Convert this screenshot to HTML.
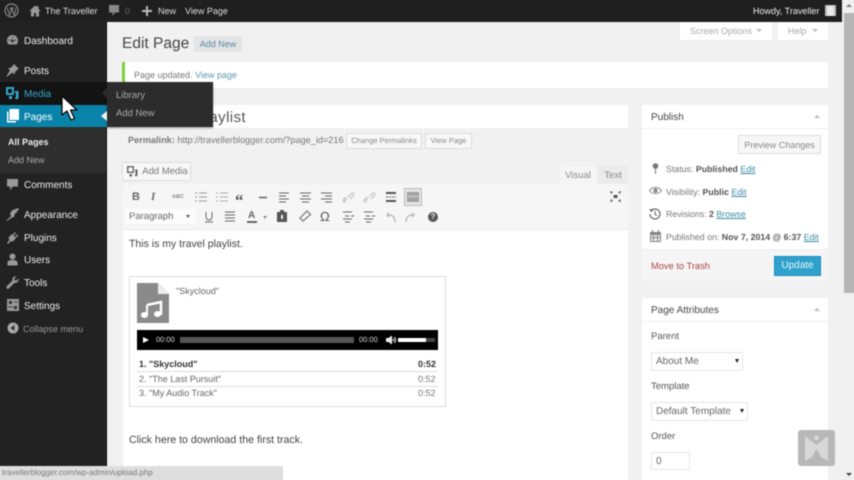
<!DOCTYPE html>
<html><head><meta charset="utf-8"><title>Edit Page</title>
<style>
*{box-sizing:border-box}
html,body{margin:0;padding:0;width:854px;height:480px;overflow:hidden;background:#f1f1f1}
body{font-family:"Liberation Sans",sans-serif;font-size:10px;color:#555;position:relative;text-rendering:geometricPrecision}
#w{position:absolute;left:0;top:0;width:854px;height:480px;overflow:visible;filter:blur(.45px)}
.a{position:absolute;white-space:nowrap}
.t{position:absolute;white-space:nowrap;line-height:14px;transform:translateY(-6px)}
.box{position:absolute;background:#fff}
.btn{position:absolute;background:#f7f7f7;border:1px solid #ddd;text-align:center;color:#777;white-space:nowrap}
.m{position:absolute;left:24px;font-size:10px;color:#eee;line-height:14px;transform:translateY(-5px);white-space:nowrap}
svg{position:absolute;overflow:visible}
.l{color:#3a8aa6;text-decoration:underline}
b{color:#555}
.sel{position:absolute;background:#fff;border:1px solid #e6e6e6;font-size:10px;color:#666;line-height:17px;padding-left:4px;white-space:nowrap}
.sel i{position:absolute;top:6px;width:0;height:0;border-left:2.5px solid transparent;border-right:2.5px solid transparent;border-top:4px solid #222}
</style></head><body><div id="w">

<!-- sidebar -->
<div class="a" style="left:-10px;top:-10px;width:116px;height:500px;background:#222"></div>
<div class="a" style="left:106px;top:22px;width:1px;height:468px;background:#0c0c0c"></div>
<div class="a" style="left:-10px;top:82px;width:117px;height:23px;background:#131313"></div>
<div class="a" style="left:-10px;top:105px;width:117px;height:22px;background:#0a83aa"></div>
<div class="a" style="left:-10px;top:127px;width:116px;height:46px;background:#2e2e2e"></div>

<div class="m" style="top:40px">Dashboard</div>
<div class="m" style="top:70px">Posts</div>
<div class="m" style="top:93px;color:#36a5cc">Media</div>
<div class="m" style="top:116px;color:#fff">Pages</div>
<div class="m" style="top:140px;left:8px;font-size:9px;font-weight:bold;color:#eee">All Pages</div>
<div class="m" style="top:158px;left:8px;font-size:9px;color:#aaa">Add New</div>
<div class="m" style="top:184px">Comments</div>
<div class="m" style="top:214px">Appearance</div>
<div class="m" style="top:237px">Plugins</div>
<div class="m" style="top:259px">Users</div>
<div class="m" style="top:282px">Tools</div>
<div class="m" style="top:305px">Settings</div>
<div class="m" style="top:327px;left:23px;font-size:9px;color:#999">Collapse menu</div>

<!-- sidebar icons -->
<svg style="left:6px;top:34px" width="13" height="12" viewBox="0 0 13 12"><path d="M6.5 1A5.5 5.5 0 0 0 1 6.5c0 1.6.6 3 1.5 4h8c.9-1 1.5-2.4 1.5-4A5.5 5.5 0 0 0 6.5 1z" fill="#999"/><circle cx="6.5" cy="7" r="1.5" fill="#333"/><circle cx="3.5" cy="6" r=".8" fill="#333"/><circle cx="9.5" cy="6" r=".8" fill="#333"/><circle cx="6.5" cy="3.5" r=".8" fill="#333"/></svg>
<svg style="left:6px;top:64px" width="13" height="13" viewBox="0 0 13 13"><path d="M8 0l5 5-1.500.5-2.500 2.500-.5 2.500-2-2L1 12.500 0 13l.5-1L4 6.500l-2-2L4.500 4 7 1.500z" fill="#999"/></svg>
<svg style="left:6px;top:87px" width="13" height="13" viewBox="0 0 13 13"><path d="M0 0h6v6H0z" fill="none" stroke="#36a5cc" stroke-width="2" transform="translate(1 1)"/><path d="M9 4h3.500v7l-2 1.500-2-1.500 1.500-1V6H9zM3 9h3v3H3z" fill="#36a5cc"/></svg>
<svg style="left:6px;top:109px" width="13" height="14" viewBox="0 0 13 14"><path d="M3.500 0H13v11H3.500z" fill="#fff"/><path d="M1 2.500h1.500V12H10v1.500H1z" fill="#fff"/></svg>
<svg style="left:6px;top:178px" width="13" height="13" viewBox="0 0 13 13"><path d="M1 1h11v7.500H7L4 12V8.500H1z" fill="#999"/></svg>
<svg style="left:6px;top:208px" width="13" height="13" viewBox="0 0 13 13"><path d="M13 1.500l-1-1.500-6 2.500-2 3L5 8 .5 12.500 1 13l5-3.500 2-.5 1-3.500 3-2-2 .5z" fill="#999"/></svg>
<svg style="left:6px;top:231px" width="13" height="13" viewBox="0 0 13 13"><path d="M1 12l2.500-3-1-2.500L6 3l4 4-3 3.500-2-.5-3 3zM7 3.500l2-2.500 1 1-2 2.500zM9 5.500l2.500-2 1 1-2.500 2z" fill="#999"/></svg>
<svg style="left:6px;top:253px" width="13" height="13" viewBox="0 0 13 13"><circle cx="6.500" cy="3.500" r="3" fill="#999"/><path d="M1.500 12.500v-3c0-1.500 1.500-2.500 5-2.500s5 1 5 2.500v3z" fill="#999"/></svg>
<svg style="left:6px;top:276px" width="13" height="13" viewBox="0 0 13 13"><path d="M12.500 2.500L10 5 8 3l2.500-2.500C8 0 6 1.500 6.500 4.500L.5 10.500c-.5.600 0 1.500.5 2s1.300.5 1.800 0L8.500 6.800c3 .5 4.500-1.800 4-4.300z" fill="#999"/></svg>
<svg style="left:7px;top:299px" width="12" height="12" viewBox="0 0 12 12"><path d="M0 0h12v12H0z" fill="#999"/><path d="M2 2h3v3H2zM7 7h3v3H7z" fill="#333"/><path d="M1 7.500h5v1H1zM7 2.500h4v1H7z" fill="#444"/></svg>
<svg style="left:7px;top:322px" width="12" height="12" viewBox="0 0 12 12"><circle cx="6" cy="6" r="5.500" fill="#aaa"/><path d="M7.500 3v6L3.500 6z" fill="#333"/></svg>

<!-- admin bar -->
<div class="a" style="left:-10px;top:-10px;width:852px;height:32px;background:#1f1f1f"></div>
<svg style="left:4px;top:3px" width="15" height="15" viewBox="0 0 15 15"><circle cx="7.500" cy="7.500" r="6.500" fill="none" stroke="#888" stroke-width="1.200"/><path d="M3.200 5l2.500 7 1.700-4.800-1-2.200M6 5h3.800M7.800 5l2.300 7 1.500-4.500c.3-1-.2-1.800-.5-2.300" fill="none" stroke="#888" stroke-width="1.100"/></svg>
<svg style="left:29px;top:5px" width="12" height="12" viewBox="0 0 12 12"><path d="M6 .5L.5 6h1.500v5.500h3v-3.500h2v3.500h3V6h1.500L9.500 3.500V1H8v1z" fill="#999"/></svg>
<div class="t" style="left:45px;top:10px;font-size:9px;color:#ddd">The Traveller</div>
<svg style="left:109px;top:5px" width="11" height="11" viewBox="0 0 11 11"><path d="M0 0h10v7.500H6L3.500 11V7.500H0z" fill="#888"/></svg>
<div class="t" style="left:125px;top:10px;font-size:9px;color:#666">0</div>
<svg style="left:142px;top:6px" width="10" height="10" viewBox="0 0 10 10"><path d="M4 0h2v4h4v2H6v4H4V6H0V4h4z" fill="#bbb"/></svg>
<div class="t" style="left:158px;top:10px;font-size:9px;color:#ddd">New</div>
<div class="t" style="left:185px;top:10px;font-size:9px;color:#ddd">View Page</div>
<div class="t" style="left:753px;top:10px;font-size:9px;color:#eee">Howdy, Traveller</div>
<div class="a" style="left:825px;top:5px;width:11px;height:11px;background:#bbb"></div>
<div class="a" style="left:827px;top:6px;width:7px;height:10px;background:#e8e8e8"></div>

<!-- scrollbar -->
<div class="a" style="left:842px;top:-10px;width:22px;height:500px;background:#f0f0f0"></div>
<div class="a" style="left:844px;top:13px;width:20px;height:280px;background:#b5b5b5"></div>
<div class="a" style="left:846px;top:4px;width:0;height:0;border-left:3px solid transparent;border-right:3px solid transparent;border-bottom:3px solid #777"></div>
<div class="a" style="left:846px;top:473px;width:0;height:0;border-left:3px solid transparent;border-right:3px solid transparent;border-top:3px solid #444"></div>

<!-- screen tabs -->
<div class="box" style="left:680px;top:22px;width:92px;height:18px"></div>
<div class="t" style="left:690px;top:30px;font-size:9px;color:#aaa">Screen Options</div>
<div class="a" style="left:756px;top:29px;width:0;height:0;border-left:3px solid transparent;border-right:3px solid transparent;border-top:3px solid #bbb"></div>
<div class="box" style="left:778px;top:22px;width:50px;height:18px"></div>
<div class="t" style="left:788px;top:30px;font-size:9px;color:#aaa">Help</div>
<div class="a" style="left:812px;top:29px;width:0;height:0;border-left:3px solid transparent;border-right:3px solid transparent;border-top:3px solid #bbb"></div>

<!-- heading -->
<div class="t" style="left:122px;top:43px;font-size:15.500px;color:#444;line-height:20px;transform:translateY(-9px)">Edit Page</div>
<div class="a" style="left:194px;top:36px;width:48px;height:16px;background:#e2e4e6;color:#5a8ca0;font-size:9px;line-height:16px;text-align:center">Add New</div>

<!-- notice -->
<div class="box" style="left:122px;top:62px;width:706px;height:26px;border-left:3px solid #7ad03a"></div>
<div class="t" style="left:134px;top:74px;font-size:9px;color:#777">Page updated. <span style="color:#5a99ae">View page</span></div>

<!-- title -->
<div class="box" style="left:122px;top:105px;width:506px;height:23px"></div>
<div class="a" style="right:608px;top:108px;font-size:15px;line-height:20px;color:#555;letter-spacing:.4px">My Travel Playlist</div>

<!-- permalink -->
<div class="t" style="left:128px;top:139px;font-size:9.170px;color:#777"><b style="color:#777">Permalink:</b> http://travellerblogger.com/?page_id=216</div>
<div class="btn" style="left:346px;top:133px;width:76px;height:16px;font-size:7.500px;line-height:14px;color:#888">Change Permalinks</div>
<div class="btn" style="left:425px;top:133px;width:47px;height:16px;font-size:7.500px;line-height:14px;color:#888">View Page</div>

<!-- add media -->
<div class="btn" style="left:122px;top:162px;width:69px;height:19px;font-size:9.500px;line-height:17px;padding-left:17px;color:#777">Add Media</div>
<svg style="left:127px;top:166px" width="11" height="11" viewBox="0 0 11 11"><path d="M.7.700h5.600v5.600H.7z" fill="none" stroke="#666" stroke-width="1.400"/><path d="M8 3.500h2.500v6l-1.500 1-1.500-1 1-.8V5H8zM2.500 8h2.500v2.500H2.500z" fill="#666"/></svg>

<!-- tabs -->
<div class="a" style="left:560px;top:166px;width:36px;height:19px;background:#f5f5f5;color:#888;font-size:9.500px;line-height:19px;text-align:center">Visual</div>
<div class="a" style="left:598px;top:166px;width:30px;height:19px;background:#ebebeb;color:#888;font-size:9.500px;line-height:19px;text-align:center">Text</div>

<!-- toolbar + editor -->
<div class="a" style="left:123px;top:184px;width:505px;height:45px;background:#f6f6f6"></div>
<div class="box" style="left:123px;top:229px;width:505px;height:271px;border-top:1px solid #e8e8e8"></div>

<!-- toolbar row 1 -->
<div class="a" style="left:132px;top:192px;font:bold 11px/11px 'Liberation Sans',sans-serif;color:#666">B</div>
<div class="a" style="left:151px;top:192px;font:italic bold 11px/11px 'Liberation Serif',serif;color:#666">I</div>
<div class="a" style="left:172px;top:194px;font:bold 5.500px/6px 'Liberation Sans',sans-serif;color:#888">ABC</div>
<svg style="left:0;top:0" width="854" height="480" fill="none" stroke="#888" stroke-width="1">
<path d="M195 193h2M199 193h8M195 197h2M199 197h8M195 201h2M199 201h8" stroke="#999"/>
<path d="M216 193h2M220 193h8M216 197h2M220 197h8M216 201h2M220 201h8" stroke="#aaa"/>
<path d="M259 197.500h8" stroke="#555" stroke-width="1.400"/>
<path d="M279 193h10M279 196h7M279 199h10M279 202h7" stroke="#666"/>
<path d="M300 193h11M302 196h7M300 199h11M302 202h7" stroke="#666"/>
<path d="M321 193h11M325 196h7M321 199h11M325 202h7" stroke="#666"/>
<path d="M343 202l4-4M348 197l3-3c2-2 4 0 2 2l-3 3M346 201c-2 2-4 0-2-2l2-2" stroke="#ccc" stroke-width="1.500"/>
<path d="M364 202l4-4M369 197l3-3c2-2 4 0 2 2l-3 3M367 201c-2 2-4 0-2-2l2-2" stroke="#d0d0d0" stroke-width="1.500"/>
<path d="M386 193h10M386 201h10" stroke="#555" stroke-width="2"/><path d="M386 197h10" stroke="#555" stroke-dasharray="2 1"/>
<path d="M206 212v5a3 3 0 0 0 6 0v-5M205 222h8" stroke="#666"/>
<path d="M225 212h10M225 215h10M225 218h10M225 221h10" stroke="#666"/>
<path d="M247 222h10" stroke="#3a3a3a" stroke-width="1.500"/>
<path d="M303 221l-3-3 7-7 3.500 3.500z" stroke="#777" stroke-width="1.200"/>
<path d="M343 212h9M345 216h4M351 216h3M343 219h9M345 222h5" stroke="#666"/>
<path d="M364 212h9M366 216h4M372 216h3M364 219h9M366 222h5" stroke="#666"/>
<path d="M395 222c0-4-2-7-6-7" stroke="#bbb" stroke-width="1.500"/><path d="M389 212v6l-3-3z" fill="#bbb" stroke="none"/>
<path d="M406 222c0-4 2-7 6-7" stroke="#bbb" stroke-width="1.500"/><path d="M412 212v6l3-3z" fill="#bbb" stroke="none"/>
</svg>
<div class="a" style="left:235px;top:192px;font:bold 17px/17px 'Liberation Serif',serif;color:#555">“</div>
<div class="a" style="left:404px;top:188px;width:18px;height:18px;background:#e4e4e4;border:1px solid #bbb"></div>
<div class="a" style="left:407px;top:192px;width:12px;height:10px;background:#a0a0a0"></div>
<div class="a" style="left:408px;top:195px;width:10px;height:3px;background:#bbb"></div>
<!-- row 2 -->
<div class="a" style="left:125px;top:209px;width:71px;height:15px;background:#fcfcfc;font-size:9.500px;line-height:15px;padding-left:4px;color:#666">Paragraph</div>
<div class="a" style="left:186px;top:215px;width:0;height:0;border-left:2.500px solid transparent;border-right:2.500px solid transparent;border-top:3px solid #555"></div>
<div class="a" style="left:248px;top:211px;font:bold 10px/10px 'Liberation Sans',sans-serif;color:#666">A</div>
<div class="a" style="left:263px;top:216px;width:0;height:0;border-left:2.500px solid transparent;border-right:2.500px solid transparent;border-top:3px solid #888"></div>
<div class="a" style="left:277px;top:212px;width:10px;height:10px;background:#555"></div>
<div class="a" style="left:280px;top:210px;width:4px;height:3px;background:#555"></div>
<div class="a" style="left:281px;top:215px;width:2px;height:4px;background:#eee"></div>
<div class="a" style="left:320px;top:210px;font:13px/14px 'Liberation Sans',sans-serif;color:#555">Ω</div>
<div class="a" style="left:428px;top:212px;width:10px;height:10px;border-radius:50%;background:#555;color:#eee;font:bold 8px/10px 'Liberation Sans',sans-serif;text-align:center">?</div>
<svg style="left:610px;top:191px" width="11" height="11" viewBox="0 0 11 11" fill="#555"><path d="M3.500 4h4v3h-4z"/><path d="M0 0l3 1-2 2zM11 0l-1 3-2-2zM0 11l1-3 2 2zM11 11l-3-1 2-2z"/></svg>

<!-- editor content -->
<div class="t" style="left:129px;top:243px;font-size:10.500px;color:#444">This is my travel playlist.</div>
<div class="a" style="left:129px;top:276px;width:317px;height:131px;border:1px solid #ddd;background:#fff"></div>
<svg style="left:137px;top:283px" width="32" height="40" viewBox="0 0 32 40"><path d="M0 0h21l11 11v29H0z" fill="#8a8a8a"/><path d="M21 0l11 11H21z" fill="#eee"/><path d="M10 22l14-3v13" fill="none" stroke="#fff" stroke-width="2.500"/><ellipse cx="7.500" cy="32" rx="3.500" ry="3" fill="#fff"/><ellipse cx="20.500" cy="31" rx="3.500" ry="3" fill="#fff"/><path d="M10 22v10" stroke="#fff" stroke-width="2"/></svg>
<div class="t" style="left:176px;top:290px;font-size:9px;color:#666">"Skycloud"</div>
<div class="a" style="left:137px;top:330px;width:301px;height:20px;background:#000"></div>
<div class="a" style="left:143px;top:337px;width:0;height:0;border-top:3.500px solid transparent;border-bottom:3.500px solid transparent;border-left:6px solid #fff"></div>
<div class="t" style="left:156px;top:340px;font-size:7.500px;color:#ddd;transform:translateY(-7px)">00:00</div>
<div class="a" style="left:180px;top:337px;width:174px;height:6px;background:#555"></div>
<div class="t" style="left:359px;top:340px;font-size:7.500px;color:#ddd;transform:translateY(-7px)">00:00</div>
<svg style="left:386px;top:335px" width="10" height="10" viewBox="0 0 10 10"><path d="M0 3h2.500L6 .5v9L2.500 7H0z" fill="#eee"/><path d="M7 3.500c1 1 1 2 0 3M8.500 2c1.500 2 1.500 4 0 6" stroke="#eee" fill="none"/></svg>
<div class="a" style="left:398px;top:338px;width:37px;height:4px;background:#444"></div>
<div class="a" style="left:398px;top:338px;width:28px;height:4px;background:#fff"></div>
<div class="t" style="left:139px;top:363px;font-size:9px;color:#333;font-weight:bold">1. "Skycloud"</div>
<div class="t" style="left:418px;top:363px;font-size:9px;color:#333;font-weight:bold">0:52</div>
<div class="a" style="left:137px;top:371px;width:301px;height:1px;background:#ddd"></div>
<div class="t" style="left:139px;top:378px;font-size:9px;color:#666">2. "The Last Pursuit"</div>
<div class="t" style="left:418px;top:378px;font-size:9px;color:#777">0:52</div>
<div class="a" style="left:137px;top:386px;width:301px;height:1px;background:#ddd"></div>
<div class="t" style="left:139px;top:392px;font-size:9px;color:#666">3. "My Audio Track"</div>
<div class="t" style="left:418px;top:392px;font-size:9px;color:#777">0:52</div>
<div class="t" style="left:129px;top:439px;font-size:10.620px;color:#444">Click here to download the first track.</div>

<!-- publish -->
<div class="box" style="left:642px;top:105px;width:186px;height:176px"></div>
<div class="a" style="left:642px;top:128px;width:186px;height:1px;background:#eee"></div>
<div class="t" style="left:651px;top:117px;font-size:10px;color:#444">Publish</div>
<div class="a" style="left:814px;top:115px;width:0;height:0;border-left:3px solid transparent;border-right:3px solid transparent;border-bottom:3px solid #bbb"></div>
<div class="btn" style="left:738px;top:135px;width:83px;height:19px;font-size:9px;line-height:18px;color:#888">Preview Changes</div>
<svg style="left:652px;top:163px" width="7" height="11" viewBox="0 0 7 11"><circle cx="3.500" cy="3" r="2.800" fill="#777"/><path d="M3 5h1v6H3z" fill="#777"/></svg>
<div class="t" style="left:666px;top:168px;font-size:8.800px;color:#777">Status: <b>Published</b> <span class="l">Edit</span></div>
<svg style="left:649px;top:186px" width="13" height="9" viewBox="0 0 13 9"><path d="M.5 4.500C3 .5 10 .5 12.500 4.500 10 8.500 3 8.500.5 4.500z" fill="none" stroke="#888"/><circle cx="6.500" cy="4.500" r="2.200" fill="#888"/></svg>
<div class="t" style="left:666px;top:191px;font-size:8.800px;color:#777">Visibility: <b>Public</b> <span class="l">Edit</span></div>
<svg style="left:649px;top:208px" width="12" height="12" viewBox="0 0 12 12"><path d="M2 3a5 5 0 1 1-1 3" fill="none" stroke="#666" stroke-width="1.200"/><path d="M0 1.500L3.500 1 3 4.500z" fill="#666"/><path d="M6 3v3.500l2 1" fill="none" stroke="#666"/></svg>
<div class="t" style="left:666px;top:213px;font-size:8.800px;color:#777">Revisions: <b>2</b> <span class="l">Browse</span></div>
<svg style="left:650px;top:230px" width="11" height="12" viewBox="0 0 11 12"><path d="M0 2h11v10H0z" fill="#888"/><path d="M1 5h2v2H1zM4 5h3v2H4zM8 5h2v2H8zM1 8h2v3H1zM4 8h3v3H4zM8 8h2v3H8z" fill="#eee"/><path d="M2 0h1v3H2zM8 0h1v3H8z" fill="#666"/></svg>
<div class="t" style="left:666px;top:236px;font-size:8.800px;color:#777">Published on: <b>Nov 7, 2014 @ 6:37</b> <span class="l">Edit</span></div>
<div class="a" style="left:642px;top:249px;width:186px;height:32px;background:#f5f5f5;border-top:1px solid #eee"></div>
<div class="t" style="left:651px;top:265px;font-size:9.300px;color:#a44">Move to Trash</div>
<div class="a" style="left:774px;top:256px;width:47px;height:20px;background:#2ea2cc;border:1px solid #1e8cbe;color:#e8f4f8;font-size:10px;line-height:18px;text-align:center">Update</div>

<!-- page attributes -->
<div class="box" style="left:642px;top:298px;width:186px;height:202px"></div>
<div class="a" style="left:642px;top:321px;width:186px;height:1px;background:#eee"></div>
<div class="t" style="left:651px;top:310px;font-size:10px;color:#444">Page Attributes</div>
<div class="a" style="left:814px;top:308px;width:0;height:0;border-left:3px solid transparent;border-right:3px solid transparent;border-bottom:3px solid #bbb"></div>
<div class="t" style="left:651px;top:336px;font-size:9.500px;color:#555">Parent</div>
<div class="sel" style="left:651px;top:352px;width:92px;height:19px">About Me<i style="left:83px"></i></div>
<div class="t" style="left:651px;top:386px;font-size:9.500px;color:#555">Template</div>
<div class="sel" style="left:651px;top:402px;width:97px;height:19px">Default Template<i style="left:88px"></i></div>
<div class="t" style="left:651px;top:436px;font-size:9.500px;color:#555">Order</div>
<div class="sel" style="left:651px;top:452px;width:39px;height:18px">0</div>

<!-- watermark -->
<div class="a" style="left:798px;top:430px;width:37px;height:36px;background:#b8b8b8;border-radius:3px"></div>
<svg style="left:798px;top:430px" width="37" height="36" viewBox="0 0 37 36"><path d="M7 6l11.500 9L30 6v25l-7-4-4.500-8-4.500 8-7 4z" fill="#d8d8d8"/><circle cx="18.500" cy="8" r="2.500" fill="#d8d8d8"/></svg>

<!-- status bar -->
<div class="a" style="left:-10px;top:466px;width:293px;height:24px;background:#dedede"></div>
<div class="t" style="left:2px;top:473px;font-size:8px;color:#777;transform:translateY(-7px)">travellerblogger.com/wp-admin/upload.php</div>

<!-- flyout -->
<div class="a" style="left:107px;top:82px;width:106px;height:45px;background:#2c2c2c;box-shadow:0 1px 2px rgba(0,0,0,.4)"></div>
<div class="a" style="left:102px;top:88px;width:0;height:0;border-top:5px solid transparent;border-bottom:5px solid transparent;border-right:5px solid #2c2c2c"></div>
<div class="a" style="left:101px;top:111px;width:0;height:0;border-top:5px solid transparent;border-bottom:5px solid transparent;border-right:6px solid #f1f1f1"></div>
<div class="t" style="left:116px;top:95px;font-size:9.500px;color:#aaa">Library</div>
<div class="t" style="left:116px;top:113px;font-size:9.500px;color:#aaa">Add New</div>

<!-- cursor -->
<svg style="left:61px;top:95px" width="19" height="26" viewBox="0 0 19 26"><path d="M1 1v19l5-4 4 9 3.500-1.500-4-8.500H16z" fill="#fff" stroke="#000" stroke-width="1.200" stroke-linejoin="round"/></svg>

</div></body></html>
